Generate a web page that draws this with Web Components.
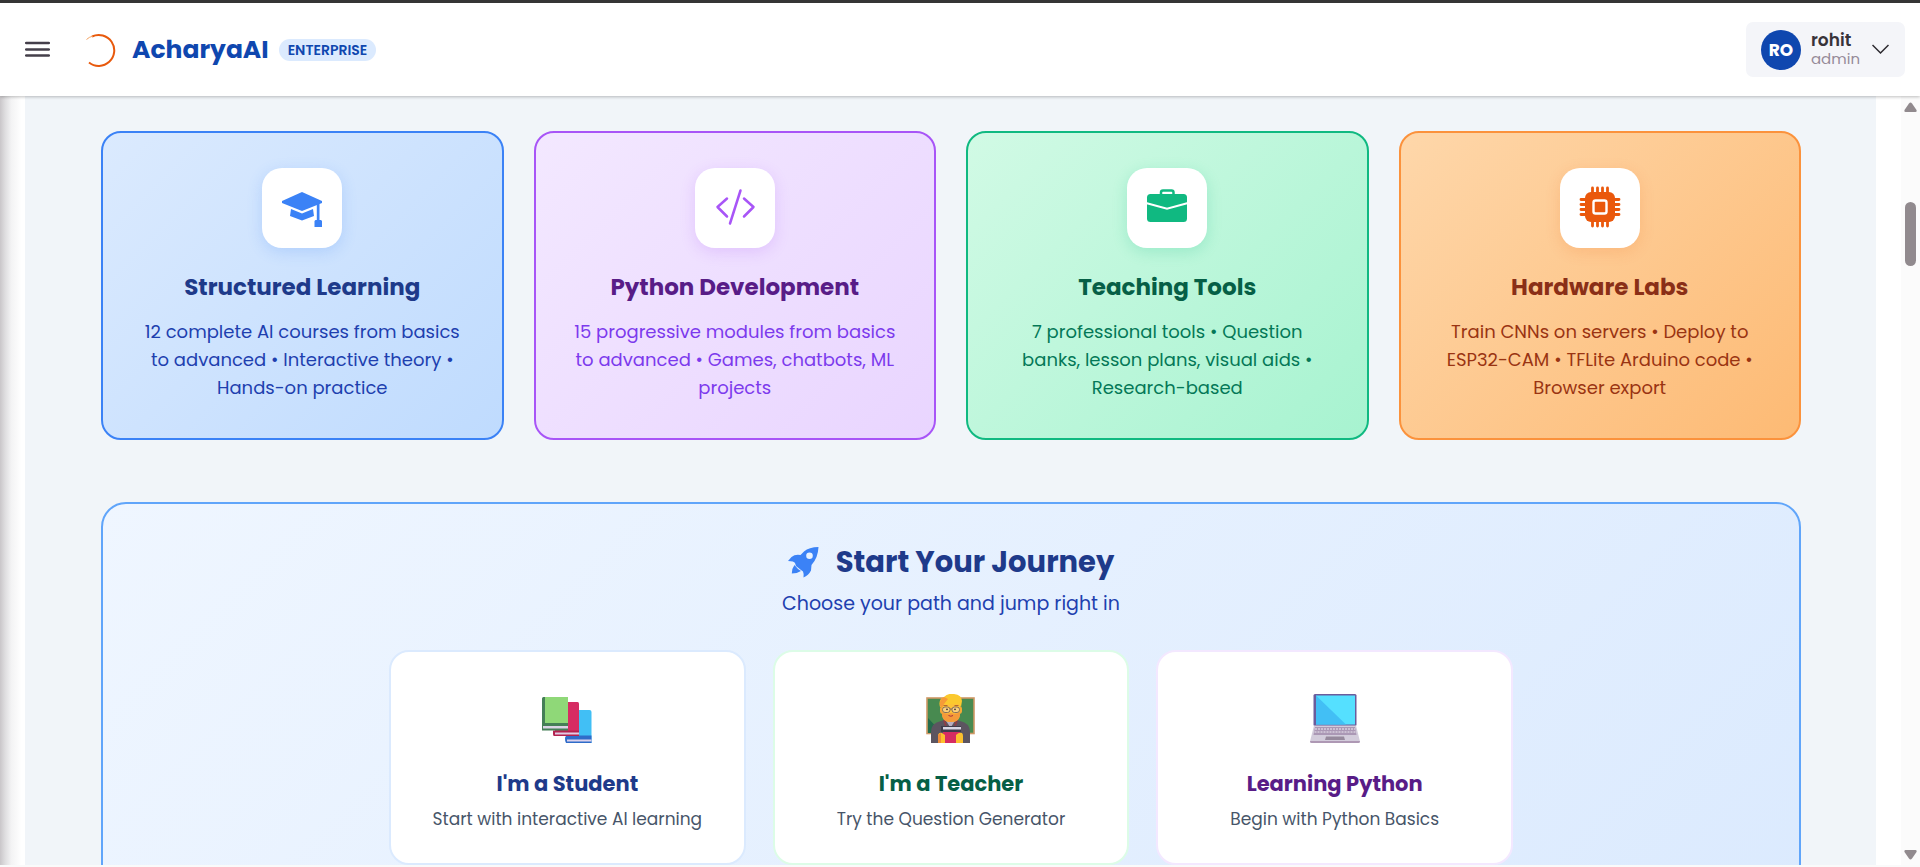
<!DOCTYPE html>
<html lang="en">
<head>
<meta charset="utf-8">
<title>AcharyaAI</title>
<style>
  body {
    margin: 0;
    font-family: Poppins, Inter, "Open Sans", sans-serif;
    background: #fff;
  }
</style>
</head>
<body>
<acharya-app>
  <app-header slot="header"></app-header>

  <feature-card slot="feature" tone="blue">
    <svg slot="icon" viewBox="0 0 80 80" fill="#3b82f6">
      <path d="M40 24 60 33v2L40 43 20 35v-2z"/>
      <path d="M29 41l11 4.500 11-4.500 1 7-12 4.500L28 48z"/>
      <path d="M54.800 36h2.700v16h-2.700z"/>
      <path d="M53.500 52h5.500l1 1v6h-7.500v-6z"/>
    </svg>
    <span slot="title">Structured Learning</span>
    12 complete AI courses from basics to advanced • Interactive theory • Hands-on practice
  </feature-card>

  <feature-card slot="feature" tone="purple">
    <svg slot="icon" viewBox="0 0 80 80" fill="none" stroke="#a855f7" stroke-width="2.500" stroke-linecap="round" stroke-linejoin="round">
      <path d="M32 30.500l-9.500 8.500 9.500 9.500M49 30.500l9.500 8.500-9.500 9.500M45.500 22.500l-10.500 33"/>
    </svg>
    <span slot="title">Python Development</span>
    15 progressive modules from basics to advanced • Games, chatbots, ML projects
  </feature-card>

  <feature-card slot="feature" tone="green">
    <svg slot="icon" viewBox="0 0 80 80">
      <rect x="34" y="22.500" width="12.500" height="8" rx="2" fill="none" stroke="#10b981" stroke-width="2.500"/>
      <rect x="20" y="26" width="40" height="28" rx="3.500" fill="#10b981"/>
      <path d="M19 35l21 5.800L61 35" fill="none" stroke="#fff" stroke-width="2"/>
    </svg>
    <span slot="title">Teaching Tools</span>
    7 professional tools • Question banks, lesson plans, visual aids • Research-based
  </feature-card>

  <feature-card slot="feature" tone="orange">
    <svg slot="icon" viewBox="0 0 80 80">
      <path d="M32.500 20v38M37.500 20v38M42.500 20v38M47.500 20v38M21 31.500h38M21 36.500h38M21 41.500h38M21 46.500h38" stroke="#ea580c" stroke-width="2.800" stroke-linecap="round"/>
      <rect x="25" y="24" width="30" height="30" rx="6" fill="#ea580c"/>
      <rect x="33.500" y="32.500" width="13" height="13" rx="2" fill="none" stroke="#fff" stroke-width="2.400"/>
    </svg>
    <span slot="title">Hardware Labs</span>
    Train CNNs on servers • Deploy to ESP32-CAM • TFLite Arduino code • Browser export
  </feature-card>

  <journey-panel slot="journey">
    <path-card tone="blue">
      <svg slot="icon" viewBox="0 0 50 50">
        <path d="M25 16h22.500q2 0 2 2v31H25z" fill="#41bff5"/>
        <path d="M23 44.500q0-3 3-3h23.500V49H24q-1-1-1-4.500z" fill="#2f6cc9"/>
        <path d="M25 45.500h24.500v2H25z" fill="#dcd2ec"/>
        <path d="M13 8h22.500q1.500 0 1.500 1.500V42H13z" fill="#d62c62"/>
        <path d="M11 36.500h26V42H12q-1 0-1-2z" fill="#b3224f"/>
        <path d="M13 38.500h24v2H13z" fill="#e2cbe3"/>
        <path d="M1.500 3h23Q26 3 26 4.500V36H1.500z" fill="#8fd878"/>
        <path d="M0 4.500Q0 3 1.500 3H3v26h23v7.500H0z" fill="#447f57"/>
        <path d="M3 3h23v26H3z" fill="#8fd878"/>
        <path d="M1 32h25v2.500H1z" fill="#dad4e6"/>
      </svg>
      <span slot="title">I'm a Student</span>
      Start with interactive AI learning
    </path-card>

    <path-card tone="green">
      <svg slot="icon" viewBox="0 0 50 50">
        <rect x="1" y="4" width="47" height="35.500" fill="#488a50" stroke="#cf9865" stroke-width="1.600"/>
        <path d="M2 24V39h14z" fill="#246b4b"/>
        <path d="M5 49V38q0-9 10-11l6-2h7l6 2q10 2 10 11v11z" fill="#5c5560"/>
        <path d="M19 25l5.500 9 5.500-9z" fill="#b8adc0"/>
        <path d="M18 26l2 6M31 26l-2 6" stroke="#8d3e47" stroke-width="2"/>
        <rect x="14" y="12" width="22" height="8" rx="3" fill="#f6a836"/>
        <path d="M16 9h18v10q0 9-9 9t-9-9z" fill="#fdc236"/>
        <path d="M16 18q4 3 9 1 5 2 9-1 1 10-9 10t-9-10z" fill="#f59a3a"/>
        <path d="M14 13Q12 5 18 3 22-1 28 0 36 1 36 7l-1 6-2-3H18l-2 3z" fill="#fbc92e"/>
        <path d="M14 12Q13 5 18 3l4 2-4 5-2 4z" fill="#f69a38"/>
        <path d="M17.500 11.500h4M28.500 11.500h4" stroke="#b5642f"/>
        <g fill="#fbd27c" stroke="#6a5560" stroke-width=".8">
          <rect x="16.500" y="13" width="7.500" height="5.500" rx="2.500"/>
          <rect x="26" y="13" width="7.500" height="5.500" rx="2.500"/>
          <path d="M24 15h2"/>
        </g>
        <circle cx="21" cy="15.300" r=".9" fill="#3b2d35"/>
        <circle cx="29" cy="15.300" r=".9" fill="#3b2d35"/>
        <path d="M22.500 21.500q2.500 1.500 4.500 0" stroke="#a8323d" fill="none"/>
        <path d="M17 36h17v13H17z" fill="#d62c62"/>
        <path d="M15 32h20v6H15z" fill="#403c4c"/>
        <path d="M17 33h18v2.500H17z" fill="#d8d5e2"/>
        <path d="M12 49V41q1-3 4-2l3 2v8zM30 49V41q3-3 6-2 1 1 1 3v7z" fill="#fcc02e"/>
        <path d="M12 41l3-2v10h-3z" fill="#f08c38"/>
      </svg>
      <span slot="title">I'm a Teacher</span>
      Try the Question Generator
    </path-card>

    <path-card tone="purple">
      <svg slot="icon" viewBox="0 0 50 50">
        <rect x="3.500" y="0" width="43" height="32" rx="1.500" fill="#6b5c9c"/>
        <rect x="6" y="1.500" width="39" height="29" fill="#55e0ff"/>
        <path d="M6 1.500L36 30.500H6z" fill="#42bff5"/>
        <path d="M4 31.500h42l4 16q0 1.500-1.500 1.500h-47Q0 49 0 47.500z" fill="#d3ccdb"/>
        <path d="M0 47h50q0 2-1.500 2h-47Q0 49 0 47z" fill="#ae98b4"/>
        <path d="M5 33h40l1.500 8H3.500z" fill="#ab98b5"/>
        <path d="M5 35h40M4.500 38h41" stroke="#eee9f2" stroke-dasharray="2 1"/>
        <path d="M16 42.500h18l1 3.500H15z" fill="#978a9d"/>
      </svg>
      <span slot="title">Learning Python</span>
      Begin with Python Basics
    </path-card>
  </journey-panel>
</acharya-app>

<script>
// Shared base: clones a template string into an open shadow root
class BaseElement extends HTMLElement {
  constructor() {
    super();
    this.attachShadow({ mode: "open" });
    const helper = document.createElement("template");
    helper.innerHTML = this.template();
    this.shadowRoot.appendChild(helper.content.cloneNode(true));
  }
}

class AcharyaApp extends BaseElement {
  template() {
    return `
      <style>
        :host {
          display: flex;
          flex-direction: column;
          height: 100vh;
          overflow: hidden;
          box-sizing: border-box;
          border-top: 3px solid #353535;
          border-bottom: 2px solid #fafafa;
        }
        .body {
          flex: 1;
          min-height: 0;
          display: flex;
        }
        .edge {
          width: 25px;
          flex: none;
          background: linear-gradient(90deg, #c9c6c9, #dedddf 20%, #f3f3f4 45%, #fff 85%);
        }
        main {
          flex: 1;
          overflow: hidden;
          box-sizing: border-box;
          padding: 35px 75px 0 76px;
          background: #f1f5f9;
        }
        .features {
          display: grid;
          grid-template-columns: repeat(4, 1fr);
          gap: 30px;
          margin-bottom: 62px;
        }
        .gutter {
          width: 25px;
          flex: none;
        }
      </style>
      <slot name="header"></slot>
      <div class="body">
        <div class="edge"></div>
        <main>
          <div class="features"><slot name="feature"></slot></div>
          <slot name="journey"></slot>
        </main>
        <div class="gutter"></div>
        <scroll-rail></scroll-rail>
      </div>
    `;
  }
}
customElements.define("acharya-app", AcharyaApp);

class AppHeader extends BaseElement {
  template() {
    return `
      <style>
        :host {
          position: relative;
          z-index: 1;
          flex: none;
          display: flex;
          align-items: center;
          justify-content: space-between;
          height: 93px;
          padding: 0 15px 0 25px;
          background: #fff;
          box-shadow: 0 1px 3px rgba(0, 0, 0, 0.25);
        }
        button {
          font: inherit;
          border: 0;
          background: none;
          padding: 0;
          text-align: left;
        }
        svg { display: block; }
        .left { display: flex; align-items: center; }
        .brand {
          display: flex;
          align-items: center;
          margin-left: 35px;
          text-decoration: none;
          color: #0f47af;
        }
        .name {
          margin-left: 16px;
          font-size: 25px;
          font-weight: 700;
        }
        .badge {
          margin-left: 10px;
          padding: 0 9px;
          border-radius: 11px;
          background: #dbeafe;
          font-size: 14px;
          line-height: 22px;
          font-weight: 600;
        }
        .user {
          display: flex;
          align-items: center;
          box-sizing: border-box;
          height: 55px;
          padding: 0 16px 0 15px;
          border-radius: 7px;
          background: #f4f5f9;
        }
        .avatar {
          width: 40px;
          height: 40px;
          border-radius: 50%;
          background: #0f47af;
          color: #fff;
          font-size: 17px;
          font-weight: 700;
          line-height: 40px;
          text-align: center;
        }
        .who { margin: 0 12px 0 10px; }
        .who strong {
          display: block;
          font-size: 17px;
          font-weight: 600;
          line-height: 19px;
          color: #38333a;
        }
        .who span {
          display: block;
          font-size: 15px;
          line-height: 18px;
          color: #968b99;
        }
      </style>
      <div class="left">
        <button aria-label="Menu">
          <svg width="25" height="17" viewBox="0 0 25 17" stroke="#443f4a" stroke-width="2.600" stroke-linecap="round">
            <path d="M1.200 2h22.600M1.200 8.500h22.600M1.200 14.500h22.600"/>
          </svg>
        </button>
        <a class="brand" href="#">
          <svg width="31" height="34" viewBox="0 0 31 34" fill="none" stroke="#e8590c">
            <path d="M4 29.500a15.500 15.500 0 1 0 3-26" stroke-width="2"/>
            <path d="M1.500 6.500Q4 4 8 3" stroke="#f4a261"/>
          </svg>
          <span class="name">AcharyaAI</span>
          <span class="badge">ENTERPRISE</span>
        </a>
      </div>
      <button class="user">
        <div class="avatar">RO</div>
        <div class="who"><strong>rohit</strong><span>admin</span></div>
        <svg width="17" height="11" viewBox="0 0 17 11" fill="none" stroke="#2c2a30" stroke-width="1.500">
          <path d="M.5 1l8 8 8-8"/>
        </svg>
      </button>
    `;
  }
}
customElements.define("app-header", AppHeader);

class FeatureCard extends BaseElement {
  template() {
    return `
      <style>
        :host {
          display: flex;
          flex-direction: column;
          align-items: center;
          box-sizing: border-box;
          padding: 35px 33px 36px;
          border: 2px solid var(--line);
          border-radius: 20px;
          background: linear-gradient(135deg, var(--from), var(--to));
          text-align: center;
        }
        :host([tone="blue"]) {
          --line: #3b82f6; --from: #dbeafe; --to: #bfdbfe;
          --title: #1e3a8a; --text: #1e40af; --glow: rgba(59, 130, 246, 0.2);
        }
        :host([tone="purple"]) {
          --line: #a855f7; --from: #f3e8ff; --to: #e9d5ff;
          --title: #581c87; --text: #7c3aed; --glow: rgba(168, 85, 247, 0.2);
        }
        :host([tone="green"]) {
          --line: #10b981; --from: #d1fae5; --to: #a7f3d0;
          --title: #065f46; --text: #047857; --glow: rgba(16, 185, 129, 0.2);
        }
        :host([tone="orange"]) {
          --line: #fb923c; --from: #fed7aa; --to: #fdba74;
          --title: #8a2f17; --text: #9a3412; --glow: rgba(234, 88, 12, 0.15);
        }
        .tile {
          width: 80px;
          height: 80px;
          border-radius: 20px;
          background: #fff;
          box-shadow: 0 4px 15px var(--glow);
        }
        ::slotted(svg) { display: block; }
        h3 {
          margin: 20px 0 12px;
          font-size: 23px;
          line-height: 38px;
          font-weight: 700;
          color: var(--title);
        }
        p {
          margin: 0;
          font-size: 18px;
          line-height: 28px;
          color: var(--text);
        }
      </style>
      <div class="tile"><slot name="icon"></slot></div>
      <h3><slot name="title"></slot></h3>
      <p><slot></slot></p>
    `;
  }
}
customElements.define("feature-card", FeatureCard);

class JourneyPanel extends BaseElement {
  template() {
    return `
      <style>
        :host {
          display: block;
          padding: 36px 40px 60px;
          border: 2px solid #60a5fa;
          border-radius: 25px;
          background: linear-gradient(135deg, #eff6ff, #dbeafe);
          text-align: center;
        }
        h2 {
          display: flex;
          align-items: center;
          justify-content: center;
          gap: 17px;
          margin: 0;
          font-size: 29px;
          line-height: 44px;
          font-weight: 700;
          color: #1e3a8a;
        }
        p {
          margin: 6px 0 32px;
          font-size: 19px;
          line-height: 28px;
          color: #1e40af;
        }
        .paths {
          display: grid;
          grid-template-columns: repeat(3, 1fr);
          gap: 27px;
          max-width: 1124px;
          margin: 0 auto;
        }
      </style>
      <h2>
        <svg width="31" height="31" viewBox="0 0 31 31" fill="#3b82f6">
          <path fill-rule="evenodd" d="M30.500 0Q21 0 16 4.500L12.500 8Q7 7 3.500 10L0 14q6 0 7 2l1 3 5 4 2 1.500q1 2 .500 6 5-2 7.500-7l.500-5.500Q30 11 30.500 0zM21.500 5.500a3.300 3.300 0 1 1 0 6.600 3.300 3.300 0 0 1 0-6.600z"/>
          <path d="M6.500 18Q4 21 3.800 26.500 9 26.500 13 24l-3-2z"/>
        </svg>
        Start Your Journey
      </h2>
      <p>Choose your path and jump right in</p>
      <div class="paths"><slot></slot></div>
    `;
  }
}
customElements.define("journey-panel", JourneyPanel);

class PathCard extends BaseElement {
  template() {
    return `
      <style>
        :host { display: block; }
        :host([tone="blue"]) { --line: #dbeafe; --title: #1e3a8a; }
        :host([tone="green"]) { --line: #dcfce7; --title: #065f46; }
        :host([tone="purple"]) { --line: #f3e8ff; --title: #581c87; }
        a {
          display: flex;
          flex-direction: column;
          align-items: center;
          padding: 42px 20px 30px;
          border: 2px solid var(--line);
          border-radius: 20px;
          background: #fff;
          text-decoration: none;
        }
        ::slotted(svg) {
          display: block;
          width: 50px;
          height: 50px;
        }
        h4 {
          margin: 25px 0 6px;
          font-size: 21px;
          line-height: 30px;
          font-weight: 700;
          color: var(--title);
        }
        span {
          font-size: 17px;
          line-height: 28px;
          color: #475569;
        }
      </style>
      <a href="#">
        <slot name="icon"></slot>
        <h4><slot name="title"></slot></h4>
        <span><slot></slot></span>
      </a>
    `;
  }
}
customElements.define("path-card", PathCard);

class ScrollRail extends BaseElement {
  template() {
    return `
      <style>
        :host {
          flex: none;
          display: flex;
          flex-direction: column;
          align-items: center;
          box-sizing: border-box;
          width: 19px;
          padding: 6px 0 5px;
          background: #fbfbfb;
        }
        svg { display: block; fill: #918a8e; }
        .thumb {
          width: 11px;
          height: 64px;
          margin: 90px 0 auto;
          border-radius: 6px;
          background: #918a8e;
        }
      </style>
      <svg width="13" height="10" viewBox="0 0 13 10"><path d="M5 1.500q1.500-2 3 0l4.500 6.500q.500 2-1 2h-10q-1.500 0-1-2z"/></svg>
      <div class="thumb"></div>
      <svg width="13" height="10" viewBox="0 0 13 10"><path d="M5 8.500q1.500 2 3 0L12.500 2q.500-2-1-2h-10Q0 0 .5 2z"/></svg>
    `;
  }
}
customElements.define("scroll-rail", ScrollRail);
</script>
</body>
</html>
